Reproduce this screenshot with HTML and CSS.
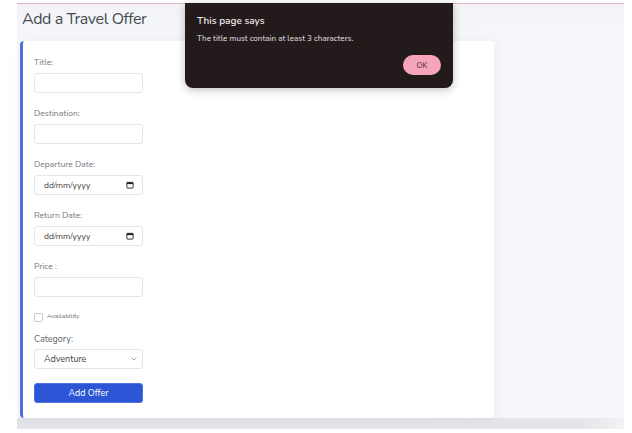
FILE: index.html
```html
<!DOCTYPE html>
<html lang="en">
<head>
<meta charset="utf-8">
<title>Add a Travel Offer</title>
<link rel="stylesheet" href="styles.css">
</head>
<body>
<div class="page">
  <h1 class="heading">Add a Travel Offer</h1>
  <form class="card">
    <div class="group">
      <label class="label">Title:</label>
      <div class="field"></div>
    </div>
    <div class="group">
      <label class="label">Destination:</label>
      <div class="field"></div>
    </div>
    <div class="group">
      <label class="label">Departure Date:</label>
      <div class="field date"><span>dd/mm/yyyy</span>
        <svg class="cal" width="8" height="8" viewBox="0 0 9 9"><rect x="1" y="1.5" width="7" height="6.5" rx="0.6" fill="none" stroke="#222" stroke-width="1"/><rect x="1" y="1.5" width="7" height="2" fill="#222"/></svg>
      </div>
    </div>
    <div class="group">
      <label class="label">Return Date:</label>
      <div class="field date"><span>dd/mm/yyyy</span>
        <svg class="cal" width="8" height="8" viewBox="0 0 9 9"><rect x="1" y="1.5" width="7" height="6.5" rx="0.6" fill="none" stroke="#222" stroke-width="1"/><rect x="1" y="1.5" width="7" height="2" fill="#222"/></svg>
      </div>
    </div>
    <div class="group">
      <label class="label">Price :</label>
      <div class="field"></div>
    </div>
    <div class="check-row">
      <span class="checkbox"></span>
      <span class="check-label">Availability</span>
    </div>
    <div class="group cat">
      <label class="label big">Category:</label>
      <div class="field select"><span>Adventure</span>
        <svg class="chev" width="6" height="4" viewBox="0 0 6 4"><path d="M0.5 0.5 L3 3 L5.5 0.5" fill="none" stroke="#888" stroke-width="0.8"/></svg>
      </div>
    </div>
    <div class="button">Add Offer</div>
  </form>
  <div class="bottom-band"></div>

  <div class="dialog">
    <div class="dialog-title">This page says</div>
    <div class="dialog-msg">The title must contain at least 3 characters.</div>
    <div class="dialog-actions"><span class="ok">OK</span></div>
  </div>
</div>
</body>
</html>
```
FILE: styles.css
```css
* { box-sizing: border-box; }
html, body { margin: 0; padding: 0; background: #ffffff; }
body {
  font-family: "Nunito", "Lato", "Open Sans", sans-serif;
  padding: 3px 8px 0 17px;
  width: 632px;
  height: 433px;
  overflow: hidden;
}
.page {
  position: relative;
  width: 607px;
  height: 425px;
  border-top: 1px solid #d6b7c6;
  background: linear-gradient(#f2f3f6, #f7f8fb 40px);
  display: flex;
  flex-direction: column;
}
.page > * { flex-shrink: 0; }
.heading {
  margin: 0;
  padding: 3px 0 0 5px;
  height: 37px;
  font-size: 16px;
  line-height: 24px;
  font-weight: 400;
  color: #474a4f;
  letter-spacing: -0.4px;
}
.card {
  margin-left: 3px;
  width: 474px;
  background: #ffffff;
  border-left: 3px solid #4b6fe2;
  border-radius: 4px;
  box-shadow: 2px 0 14px rgba(0, 0, 0, 0.05);
  padding: 15px 0 15px 11px;
  display: flex;
  flex-direction: column;
  position: relative;
  z-index: 1;
}
.group { display: flex; flex-direction: column; margin-bottom: 14px; }
.label {
  height: 12px;
  line-height: 12px;
  font-size: 8.5px;
  color: #72757c;
  margin-bottom: 5px;
}
.label.big { font-size: 9px; color: #63666d; margin-bottom: 4px; }
.field {
  width: 109px;
  height: 20px;
  border: 1px solid #e3e5ea;
  border-radius: 3px;
  background: #fff;
  display: flex;
  align-items: center;
  padding: 0 8px 0 6px;
  font-size: 8.5px;
  color: #3a3a3a;
}
.date { justify-content: space-between; padding: 0 8px 0 9px; color: #444; }
.select { justify-content: space-between; padding: 0 5px 0 9px; font-size: 9px; color: #444; }
.check-row {
  display: flex;
  align-items: center;
  height: 10px;
  margin-bottom: 12px;
}
.checkbox {
  width: 9px;
  height: 9px;
  border: 1px solid #c9cbd0;
  border-radius: 2px;
  margin-top: 2px;
}
.check-label {
  font-size: 6.5px;
  color: #666a70;
  margin-left: 4px;
  margin-top: -2px;
}
.cat { margin-bottom: 14px; }
.button {
  width: 109px;
  height: 20px;
  border-radius: 3px;
  background: #2c56d6;
  border: 1px solid #4d72e6;
  color: #fff;
  font-size: 9px;
  display: flex;
  align-items: center;
  justify-content: center;
}
.bottom-band {
  height: 11px;
  background: linear-gradient(90deg, #e3e4e7 0%, #e4e5e8 93%, #f2f3f5 100%);
}
.dialog {
  position: absolute;
  left: 168px;
  top: -1px;
  width: 268px;
  height: 85px;
  background: #231a1c;
  border-radius: 0 0 8px 8px;
  box-shadow: 0 2px 8px rgba(0, 0, 0, 0.25);
  z-index: 5;
  padding: 11px 12px 0 12px;
  color: #eee;
  display: flex;
  flex-direction: column;
}
.dialog-title { font-size: 10px; font-weight: 600; color: #f0eced; height: 14px; line-height: 14px; }
.dialog-msg { font-size: 8.1px; color: #e6e2e3; margin-top: 6px; line-height: 10px; }
.dialog-actions { display: flex; justify-content: flex-end; margin-top: 11px; }
.ok {
  width: 38px;
  height: 20px;
  border-radius: 10px;
  background: #f5a4ba;
  color: #50283a;
  font-size: 8px;
  display: flex;
  align-items: center;
  justify-content: center;
}
```
